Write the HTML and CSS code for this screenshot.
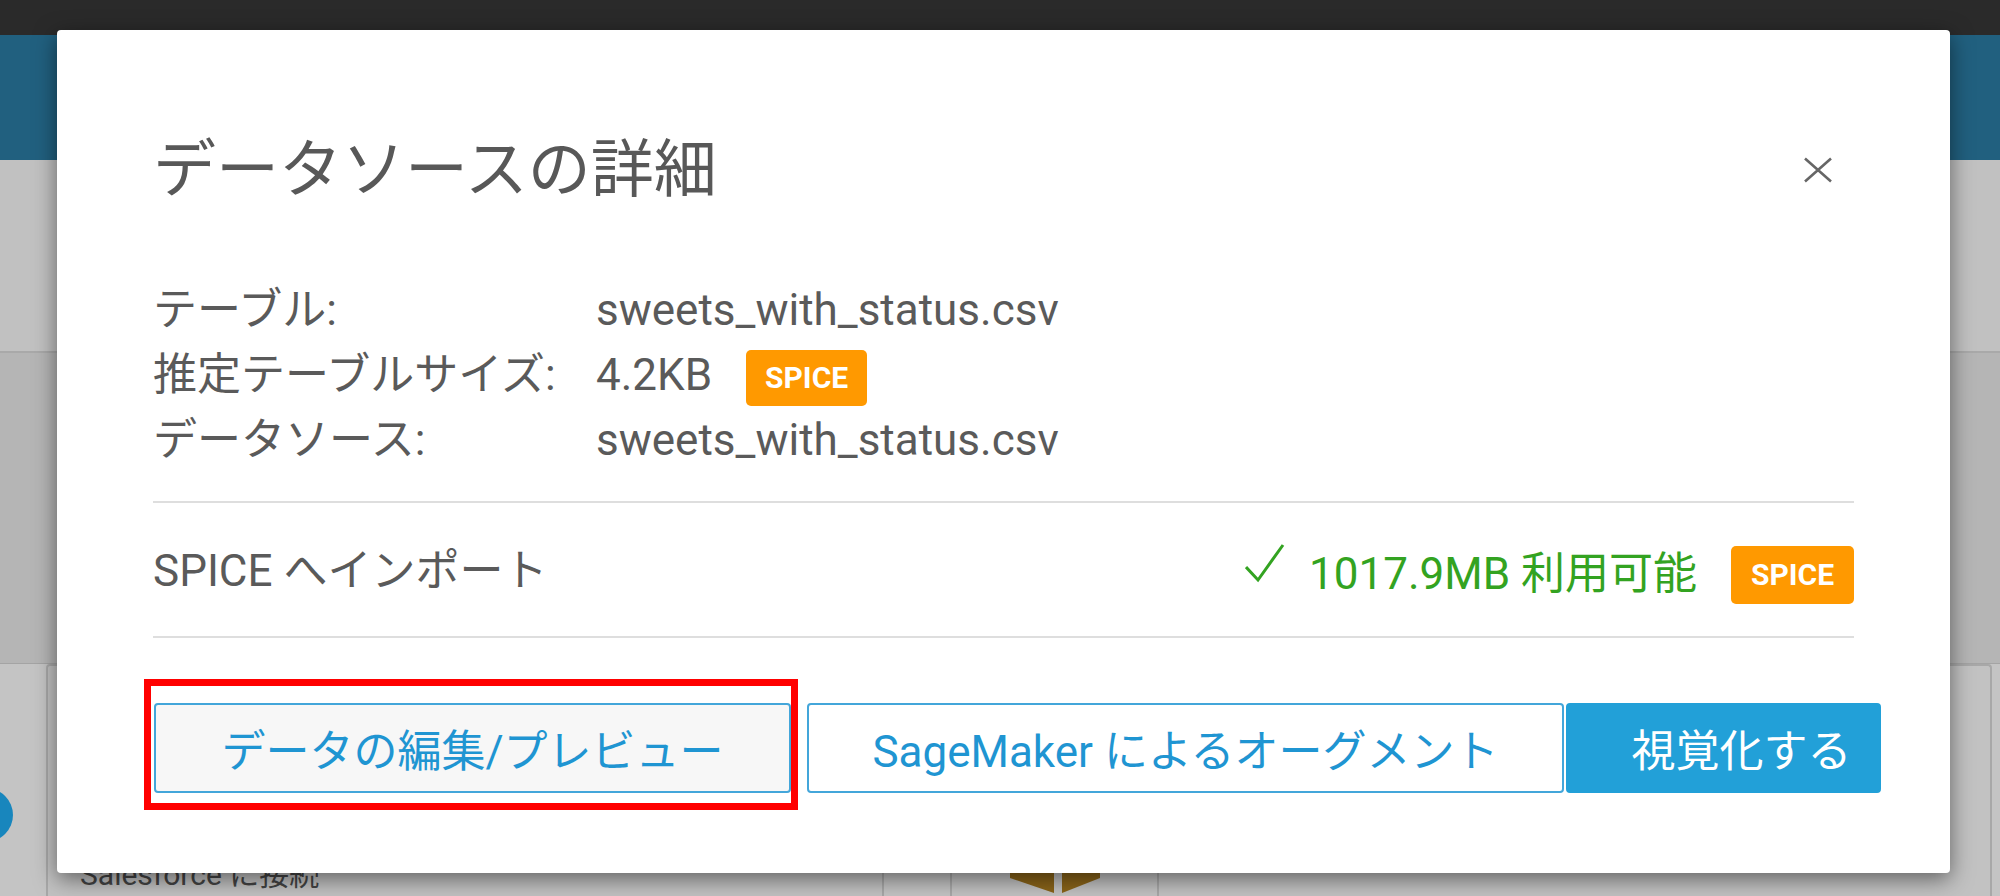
FILE: index.html
```html
<!DOCTYPE html>
<html lang="ja">
<head>
<meta charset="utf-8">
<title>データソースの詳細</title>
<link rel="stylesheet" href="styles.css">
</head>
<body>
<div class="page">
  <div class="topbar"></div>
  <div class="header"></div>
  <div class="toolbar"></div>
  <div class="section"></div>
  <div class="cards">
    <span class="step-badge"></span>
    <div class="card card-a">
      <span class="card-title">Salesforce に接続</span>
    </div>
    <div class="card card-b">
      <div class="card-icon">
        <svg class="bucket" width="100" height="32" viewBox="0 0 100 32">
          <polygon points="5,0 49,0 49,30 5,15" fill="#8a6419"/>
          <polygon points="57,0 95,0 95,15 57,30" fill="#8a6419"/>
        </svg>
      </div>
      <div class="card-body"></div>
    </div>
  </div>
</div>

<div class="modal" role="dialog">
  <div class="modal-head">
    <h2 class="modal-title">データソースの詳細</h2>
    <button class="close" aria-label="閉じる">
      <svg width="30" height="30" viewBox="0 0 30 30"><path d="M2 3.5 L28 26.5 M28 3.5 L2 26.5" stroke="#666" stroke-width="2.6" fill="none"/></svg>
    </button>
  </div>
  <dl class="info">
    <dt>テーブル:</dt><dd>sweets_with_status.csv</dd>
    <dt>推定テーブルサイズ:</dt><dd>4.2KB <span class="badge">SPICE</span></dd>
    <dt>データソース:</dt><dd>sweets_with_status.csv</dd>
  </dl>
  <div class="spice-row">
    <span class="spice-label">SPICE へインポート</span>
    <div class="avail">
      <svg class="check" width="40" height="40" viewBox="0 0 40 40"><polyline points="1,24 13,37 38,2" fill="none" stroke="#33a321" stroke-width="3"/></svg>
      <span class="avail-text">1017.9MB 利用可能</span>
      <span class="badge">SPICE</span>
    </div>
  </div>
  <div class="actions">
    <button class="btn btn-edit">データの編集/プレビュー</button>
    <button class="btn btn-sage">SageMaker によるオーグメント</button>
    <button class="btn btn-primary">視覚化する</button>
  </div>
</div>
</body>
</html>
```

FILE: styles.css
```css
html, body {
  margin: 0;
  padding: 0;
}
body {
  width: 2000px;
  height: 896px;
  overflow: hidden;
  background: #c3c3c3;
  font-family: Roboto, "Noto Sans CJK JP", sans-serif;
  position: relative;
}

/* dimmed background page */
.page {
  height: 896px;
  display: flex;
  flex-direction: column;
}
.topbar {
  height: 35px;
  background: #2a2a2a;
}
.header {
  height: 125px;
  background: #21607f;
}
.toolbar {
  height: 191px;
  background: #c1c1c1;
  border-bottom: 2px solid #a9a9a9;
}
.section {
  height: 310px;
  background: #b5b5b5;
  border-bottom: 1px solid #a4a4a4;
}
.cards {
  position: relative;
  flex: 1;
  display: flex;
  gap: 66px;
  padding-left: 46px;
  background: #c4c4c4;
}
.step-badge {
  position: absolute;
  left: -41px;
  top: 124px;
  width: 54px;
  height: 54px;
  border-radius: 50%;
  background: #1886bd;
}
.card {
  box-sizing: border-box;
  border: 2px solid #a8a8a8;
  border-bottom: none;
  border-radius: 4px 4px 0 0;
  background: #c2c2c2;
}
.card-a {
  width: 838px;
  padding: 184px 0 0 32px;
}
.card-title {
  font-size: 30px;
  color: #444;
}
.card-b {
  width: 1042px;
  display: flex;
}
.card-icon {
  width: 207px;
  border-right: 2px solid #a8a8a8;
  display: flex;
  justify-content: center;
  padding-top: 197px;
  box-sizing: border-box;
}
.bucket {
  display: block;
}

/* modal */
.modal {
  position: absolute;
  left: 57px;
  top: 30px;
  width: 1893px;
  height: 843px;
  box-sizing: border-box;
  padding: 92px 96px 0;
  background: #fff;
  border-radius: 4px;
  box-shadow: 0 6px 22px rgba(0, 0, 0, 0.5);
  color: #5a5a5a;
}
.modal-head {
  height: 96px;
  display: flex;
  align-items: center;
  justify-content: space-between;
}
.modal-title {
  margin: 0;
  font-size: 63px;
  font-weight: 400;
  line-height: 96px;
  color: #585858;
  white-space: nowrap;
}
.close {
  width: 30px;
  height: 30px;
  margin-right: 21px;
  padding: 0;
  border: none;
  background: none;
  display: flex;
}

.info {
  margin: 60px 0 0;
  display: grid;
  grid-template-columns: 443px auto;
  grid-auto-rows: 65px;
  font-size: 44px;
  line-height: 65px;
}
.info dt, .info dd {
  margin: 0;
  white-space: nowrap;
  display: flex;
  align-items: center;
}

.badge {
  display: inline-flex;
  align-items: center;
  justify-content: center;
  width: 121px;
  height: 56px;
  border-radius: 5px;
  background: #ff9900;
  color: #fff;
  font-family: Roboto, sans-serif;
  font-weight: 700;
  font-size: 30px;
  line-height: 1;
}
.info .badge {
  margin-left: 34px;
  margin-top: 4px;
}

.spice-row {
  margin-top: 28px;
  height: 137px;
  box-sizing: border-box;
  border-top: 2px solid #dedede;
  border-bottom: 2px solid #dedede;
  display: flex;
  align-items: center;
  justify-content: space-between;
  font-size: 44px;
}
.spice-label {
  margin-bottom: 6px;
}
.avail {
  display: flex;
  align-items: center;
  color: #33a321;
}
.check {
  display: block;
  margin-bottom: 14px;
  margin-right: 24px;
}
.avail-text {
  white-space: nowrap;
}
.avail .badge {
  width: 123px;
  height: 58px;
  margin-left: 34px;
  margin-top: 10px;
}

.actions {
  margin-top: 65px;
  display: flex;
  align-items: stretch;
}
.btn {
  height: 90px;
  box-sizing: border-box;
  border: 2px solid #43a6da;
  border-radius: 4px;
  font-family: Roboto, "Noto Sans CJK JP", sans-serif;
  font-size: 44px;
  color: #1f95d2;
  background: #fff;
  padding: 0;
  white-space: nowrap;
  flex: none;
}
.btn-edit {
  position: relative;
  width: 637px;
  margin-left: 1px;
  background: #f7f7f7;
}
.btn-edit::after {
  content: "";
  position: absolute;
  top: -26px;
  left: -12px;
  right: -9px;
  bottom: -19px;
  border: 7px solid #ff0000;
}
.btn-sage {
  width: 757px;
  margin-left: 16px;
}
.btn-primary {
  width: 315px;
  margin-left: 2px;
  padding-left: 36px;
  background: #22a0d8;
  border-color: #22a0d8;
  color: #fff;
}
```
